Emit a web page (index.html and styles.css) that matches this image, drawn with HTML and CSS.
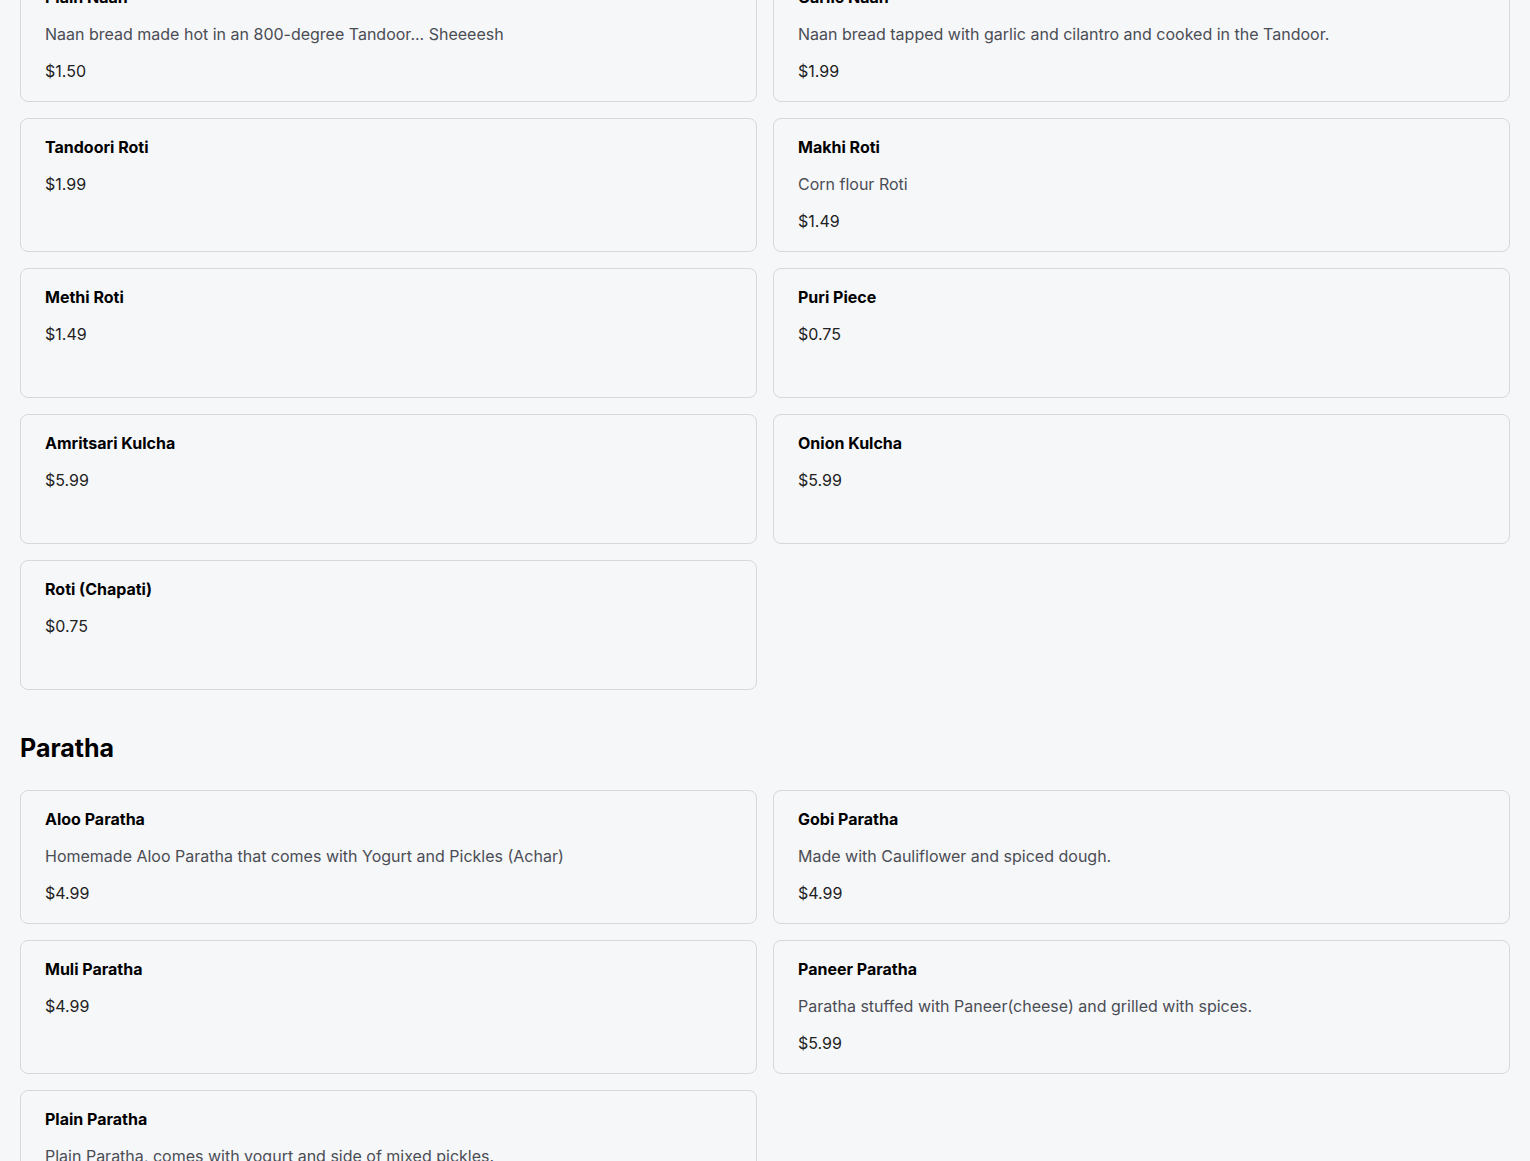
FILE: index.html
```html
<!DOCTYPE html>
<html lang="en">
<head>
    <meta charset="UTF-8">
    <meta name="viewport" content="width=device-width, initial-scale=1.0">
    <title>Menu</title>
    <link rel="stylesheet" href="styles.css">
</head>
<body>
    <main class="menu">
        <section class="category category-first">
            <div class="items">
                <div class="item">
                    <h3>Plain Naan</h3>
                    <p class="desc">Naan bread made hot in an 800-degree Tandoor... Sheeeesh</p>
                    <p class="price">$1.50</p>
                </div>
                <div class="item">
                    <h3>Garlic Naan</h3>
                    <p class="desc">Naan bread tapped with garlic and cilantro and cooked in the Tandoor.</p>
                    <p class="price">$1.99</p>
                </div>
                <div class="item">
                    <h3>Tandoori Roti</h3>
                    <p class="price">$1.99</p>
                </div>
                <div class="item">
                    <h3>Makhi Roti</h3>
                    <p class="desc">Corn flour Roti</p>
                    <p class="price">$1.49</p>
                </div>
                <div class="item">
                    <h3>Methi Roti</h3>
                    <p class="price">$1.49</p>
                </div>
                <div class="item">
                    <h3>Puri Piece</h3>
                    <p class="price">$0.75</p>
                </div>
                <div class="item">
                    <h3>Amritsari Kulcha</h3>
                    <p class="price">$5.99</p>
                </div>
                <div class="item">
                    <h3>Onion Kulcha</h3>
                    <p class="price">$5.99</p>
                </div>
                <div class="item">
                    <h3>Roti (Chapati)</h3>
                    <p class="price">$0.75</p>
                </div>
            </div>
        </section>

        <section class="category">
            <h2>Paratha</h2>
            <div class="items">
                <div class="item">
                    <h3>Aloo Paratha</h3>
                    <p class="desc">Homemade Aloo Paratha that comes with Yogurt and Pickles (Achar)</p>
                    <p class="price">$4.99</p>
                </div>
                <div class="item">
                    <h3>Gobi Paratha</h3>
                    <p class="desc">Made with Cauliflower and spiced dough.</p>
                    <p class="price">$4.99</p>
                </div>
                <div class="item">
                    <h3>Muli Paratha</h3>
                    <p class="price">$4.99</p>
                </div>
                <div class="item">
                    <h3>Paneer Paratha</h3>
                    <p class="desc">Paratha stuffed with Paneer(cheese) and grilled with spices.</p>
                    <p class="price">$5.99</p>
                </div>
                <div class="item">
                    <h3>Plain Paratha</h3>
                    <p class="desc">Plain Paratha, comes with yogurt and side of mixed pickles.</p>
                    <p class="price">$3.99</p>
                </div>
            </div>
        </section>
    </main>
</body>
</html>
```

FILE: styles.css
```css
* {
    box-sizing: border-box;
    font-family: 'Inter', 'Noto Sans', sans-serif;
}

body {
    background: #f6f7f9;
    margin: 0;
    color: #111;
}

.menu {
    padding: 0 20px 40px;
}

/* page is shown scrolled, first cards are cut at the top */
.category-first {
    margin-top: -32px;
}

h2 {
    font-size: 25px;
    font-weight: 700;
    line-height: 36px;
    margin: 40px 0 24px;
    color: #000;
}

.items {
    display: grid;
    grid-template-columns: 1fr 1fr;
    gap: 16px;
}

.item {
    background: #f6f7f9;
    border: 1px solid #d6d8dc;
    border-radius: 8px;
    padding: 16px 24px 18px;
    min-height: 130px;
}

.item h3 {
    margin: 0;
    font-size: 16px;
    font-weight: 700;
    line-height: 24px;
    color: #000;
}

.item p {
    margin: 13px 0 0;
    font-size: 16px;
    line-height: 24px;
}

.desc {
    color: #4b4d55;
}

.price {
    color: #222;
}
```
